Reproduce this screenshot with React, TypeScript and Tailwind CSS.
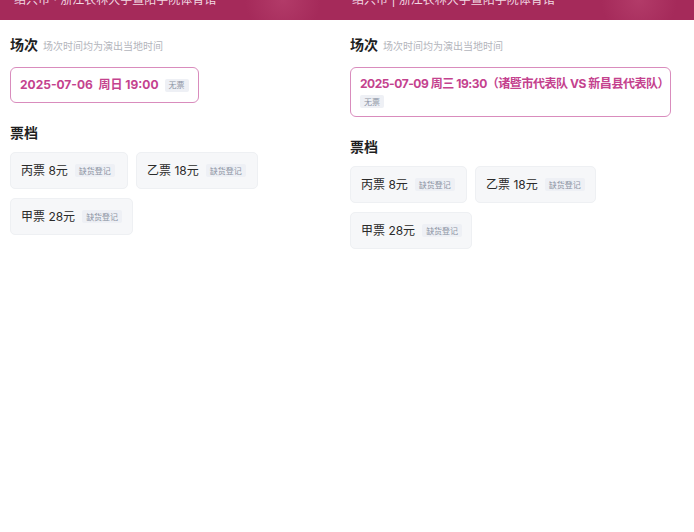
const font = "font-['Inter','Noto_Sans_CJK_SC',sans-serif]";

type Ticket = { name: string; w: string };

function Tag({ text }: { text: string }) {
  return (
    <span className="inline-flex h-[13px] items-center rounded-[2px] bg-[#eef0f5] px-[4px] text-[8px] leading-none text-[#8c93a3]">
      {text}
    </span>
  );
}

function TicketCard({ t }: { t: Ticket }) {
  return (
    <div
      className={`flex h-[37px] items-center gap-[7px] rounded-[5px] border border-[#eef0f3] bg-[#f6f7f9] pl-[10px] ${t.w}`}
    >
      <span className="text-[12px] text-[#2b2b2b]">{t.name}</span>
      <Tag text="缺货登记" />
    </div>
  );
}

function Panel({
  width,
  pad,
  place,
  session,
  stacked,
  rows,
}: {
  width: string;
  pad: string;
  place: string;
  session: string;
  stacked: boolean;
  rows: Ticket[][];
}) {
  return (
    <div className={`flex flex-col ${width}`}>
      <div className="relative h-[20px] overflow-hidden bg-[#a52a5a]">
        <div className="absolute right-[10px] top-[-30px] h-[60px] w-[90px] rounded-full bg-[radial-gradient(circle,#b8426f_0%,#a52a5a_70%)] opacity-70" />
        <div className="relative -mt-[8px] pl-[14px] text-[12px] leading-[16px] text-[#f1d8e2]">{place}</div>
      </div>
      <div className={`-mt-[1px] flex flex-1 flex-col rounded-t-[10px] bg-white pt-[15px] ${pad}`}>
        <div className="flex items-baseline gap-[5px]">
          <span className="text-[14px] font-bold text-[#1f1f1f]">场次</span>
          <span className="text-[10px] text-[#b3b5bc]">场次时间均为演出当地时间</span>
        </div>
        <div className="mt-[12px] flex">
          {stacked ? (
            <div className="flex w-[321px] flex-col gap-[3px] rounded-[6px] border border-[#d98cbd] px-[9px] py-[8px]">
              <span className="whitespace-nowrap text-[12px] font-bold leading-[16px] tracking-[-0.45px] text-[#c4428e]">
                {session}
              </span>
              <div className="flex">
                <Tag text="无票" />
              </div>
            </div>
          ) : (
            <div className="flex h-[36px] items-center gap-[6px] rounded-[6px] border border-[#d98cbd] px-[9px]">
              <span className="whitespace-pre text-[12px] font-bold text-[#c4428e]">{session}</span>
              <Tag text="无票" />
            </div>
          )}
        </div>
        <div className="mt-[19px] text-[14px] font-bold text-[#1f1f1f]">票档</div>
        <div className="mt-[9px] flex flex-col gap-[9px]">
          {rows.map((r, i) => (
            <div key={i} className="flex gap-[8px]">
              {r.map((t) => (
                <TicketCard key={t.name} t={t} />
              ))}
            </div>
          ))}
        </div>
      </div>
    </div>
  );
}

export default function App() {
  return (
    <div className={`flex h-[532px] w-[694px] overflow-hidden bg-white ${font}`}>
      <Panel
        width="w-[338px]"
        pad="px-[10px]"
        place="绍兴市 · 浙江农林大学暨阳学院体育馆"
        session="2025-07-06  周日 19:00"
        stacked={false}
        rows={[
          [
            { name: "丙票 8元", w: "w-[118px]" },
            { name: "乙票 18元", w: "w-[122px]" },
          ],
          [{ name: "甲票 28元", w: "w-[123px]" }],
        ]}
      />
      <Panel
        width="w-[356px]"
        pad="px-[12px]"
        place="绍兴市 | 浙江农林大学暨阳学院体育馆"
        session="2025-07-09 周三 19:30（诸暨市代表队 VS 新昌县代表队）"
        stacked={true}
        rows={[
          [
            { name: "丙票 8元", w: "w-[117px]" },
            { name: "乙票 18元", w: "w-[121px]" },
          ],
          [{ name: "甲票 28元", w: "w-[122px]" }],
        ]}
      />
    </div>
  );
}
